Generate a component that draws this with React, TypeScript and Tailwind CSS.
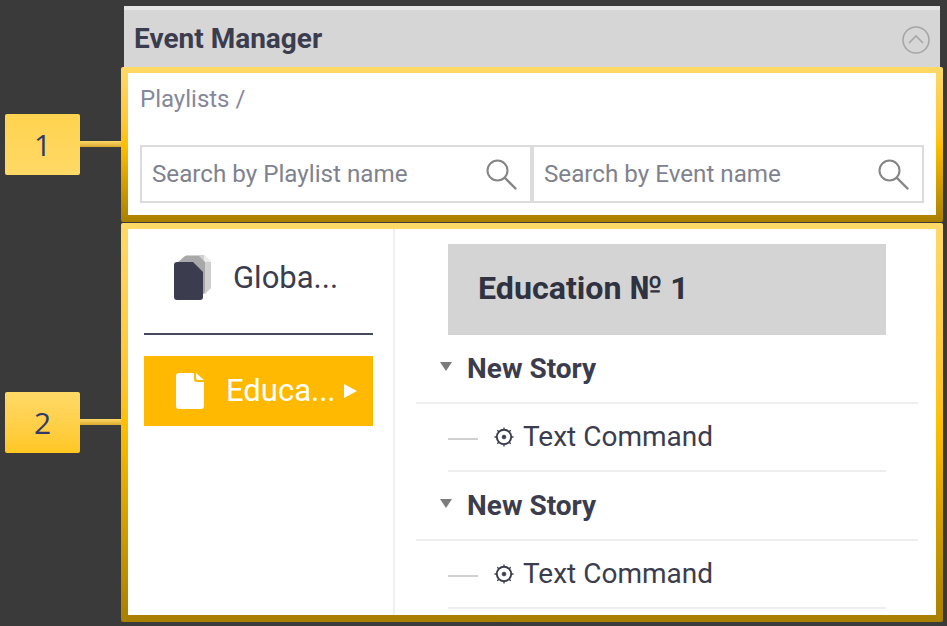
import React from 'react'

const roboto = "font-['Roboto',sans-serif]"

// single sheet, used on the amber row
const FileIcon = () => (
  <svg width="30" height="38" viewBox="0 0 30 38" className="shrink-0">
    <path d="M4 1h15v6a3 3 0 0 0 3 3h7v24a3 3 0 0 1-3 3H4a3 3 0 0 1-3-3V4a3 3 0 0 1 3-3z" fill="#fff" />
    <path d="M21 1l8 7h-6a2 2 0 0 1-2-2z" fill="#fff" />
  </svg>
)

// stack of sheets for the global playlist
const StackIcon = () => (
  <svg width="38" height="46" viewBox="0 0 38 46" className="shrink-0">
    <path d="M12 0h18l7 7v26l-6 6H12z" fill="#d0d0d0" />
    <path d="M3 8l8-7h14l6 6v30l-5 5H3z" fill="#a8a8a8" />
    <path d="M30 0l7 7h-5a2 2 0 0 1-2-2z" fill="#ececec" />
    <path d="M3 7h16l10 10v25a3 3 0 0 1-3 3H3a3 3 0 0 1-3-3V10a3 3 0 0 1 3-3z" fill="#3b3d4e" />
  </svg>
)

const GearIcon = () => (
  <svg width="20" height="20" viewBox="0 0 20 20" className="shrink-0" fill="none" stroke="#3b3d4e">
    <circle cx="10" cy="10" r="7.2" strokeWidth="1.9" />
    <circle cx="10" cy="10" r="2" fill="#3b3d4e" strokeWidth="0.5" />
    <path d="M10 0.5v2M10 17.5v2M0.5 10h2M17.5 10h2M3.3 3.3l1.5 1.5M15.2 15.2l1.5 1.5M3.3 16.7l1.5-1.5M15.2 4.8l1.5-1.5" strokeWidth="1.3" />
  </svg>
)

const SearchIcon = () => (
  <svg width="31" height="31" viewBox="0 0 31 31" className="shrink-0" fill="none" stroke="#858585" strokeLinecap="round">
    <circle cx="11.5" cy="11.5" r="10" strokeWidth="2" />
    <path d="M19 19l10.5 10.5" strokeWidth="2.4" />
  </svg>
)

const Callout = ({ n, bg }: { n: string; bg: string }) => (
  <>
    <div className={`w-[75px] h-[61px] rounded-[2px] flex items-center justify-center text-[30px] text-[#2f3a6b] font-['Open_Sans',sans-serif] ${bg}`}>
      {n}
    </div>
    <div className="w-[41px] h-[6px] mb-[1px] bg-gradient-to-b from-[#ffd966] to-[#d9a92c]" />
  </>
)

const SearchField = ({ placeholder }: { placeholder: string }) => (
  <div className="w-[392px] h-[58px] border-2 border-[#dcdcdc] flex items-center justify-between pl-[10px] pr-[13px]">
    <span className="text-[24.2px] text-[#7f828e]">{placeholder}</span>
    <SearchIcon />
  </div>
)

const Story = () => (
  <>
    <div className="h-[69px] mx-[-32px] pl-[24px] border-b-2 border-[#eeeeee] flex items-center">
      <span className="w-0 h-0 mb-[5px] border-x-[6px] border-x-transparent border-t-[9px] border-t-[#7c7c7c]" />
      <span className="ml-[15px] text-[28px] font-bold text-[#3b3d4e]">New Story</span>
    </div>
    <div className="h-[68px] border-b-2 border-[#eeeeee] flex items-center">
      <span className="w-[30px] h-[2px] bg-[#d0d0d0] mt-[4px]" />
      <span className="ml-[16px] mr-[9px]"><GearIcon /></span>
      <span className="text-[28px] text-[#3b3d4e]">Text Command</span>
    </div>
  </>
)

export default function App() {
  return (
    <div className={`w-[947px] h-[626px] bg-[#3a3a3a] pt-[6px] overflow-hidden ${roboto}`}>
      {/* panel title */}
      <div className="ml-[124px] w-[816px] h-[61px] bg-[#d6d6d6] border-t-4 border-[#e4e4e4] flex items-center justify-between pl-[10px] pr-[10px]">
        <span className="text-[28px] font-bold text-[#3b3d4e]">Event Manager</span>
        <svg width="28" height="28" viewBox="0 0 28 28" fill="none" stroke="#a6a6a6" strokeWidth="1.6" className="mt-[2px]">
          <circle cx="14" cy="14" r="13" />
          <path d="M7 17l7-7 7 7" />
        </svg>
      </div>

      {/* section 1 */}
      <div className="flex items-center pl-[5px] h-[155px]">
        <Callout n="1" bg="mb-[1px] bg-gradient-to-b from-[#ffd34f] to-[#ffd966]" />
        <div className="w-[822px] h-full rounded-[2px] pt-[6px] px-[7px] pb-[7px] bg-gradient-to-b from-[#ffd966] via-[#ffc000] to-[#a97f00]">
          <div className="h-full bg-white pl-[12px] pt-[8px]">
            <div className="h-[64px] text-[24px] text-[#85889a]">Playlists /</div>
            <div className="flex">
              <SearchField placeholder="Search by Playlist name" />
              <SearchField placeholder="Search by Event name" />
            </div>
          </div>
        </div>
      </div>

      {/* section 2 */}
      <div className="flex items-center pl-[5px] h-[399px] mt-[1px]">
        <Callout n="2" bg="bg-gradient-to-b from-[#ffd966] to-[#ffc71f]" />
        <div className="w-[822px] h-full rounded-[2px] pt-[6px] px-[7px] pb-[7px] bg-gradient-to-b from-[#ffd966] via-[#ffc000] to-[#a97f00]">
          <div className="h-full bg-white flex overflow-hidden">
            <div className="w-[267px] border-r-2 border-[#f0f0f0] pl-[16px] pr-[20px]">
              <div className="h-[106px] border-b-2 border-[#444a5a] flex items-center pl-[30px] pb-[6px]">
                <StackIcon />
                <span className="ml-[21px] text-[31px] text-[#3b3d4e]">Globa...</span>
              </div>
              <div className="mt-[21px] h-[70px] bg-[#ffb900] flex items-center pl-[31px]">
                <FileIcon />
                <span className="ml-[21px] text-[31px] text-white">Educa...</span>
                <span className="ml-[8px] w-0 h-0 border-y-[7px] border-y-transparent border-l-[13px] border-l-white" />
              </div>
            </div>
            <div className="flex-1 pt-[15px] pl-[53px] pr-[50px]">
              <div className="h-[91px] bg-[#d4d4d4] flex items-center pl-[30px] pb-[3px] text-[32.2px] font-bold text-[#2f3240]">
                Education № 1
              </div>
              <Story />
              <Story />
            </div>
          </div>
        </div>
      </div>
    </div>
  )
}
